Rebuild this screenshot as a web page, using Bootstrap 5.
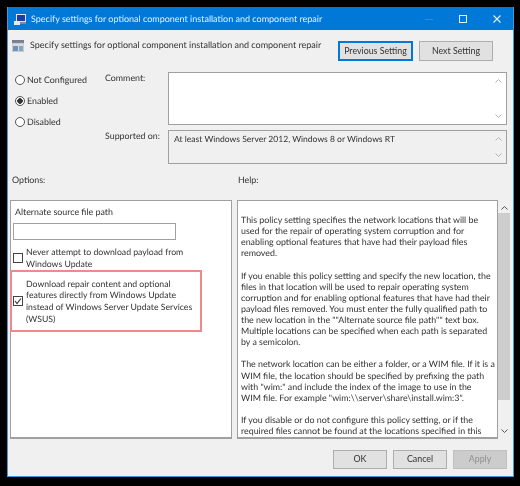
<!DOCTYPE html>
<html lang="en">
<head>
<meta charset="utf-8">
<title>Specify settings</title>
<link href="https://cdn.jsdelivr.net/npm/bootstrap@5.3.0/dist/css/bootstrap.min.css" rel="stylesheet">
<style>
html,body{height:486px;width:520px;overflow:hidden;background:#000;}
body{font-family:"Lato","Open Sans","Liberation Sans",sans-serif;font-size:8.85px;line-height:11.6px;color:#333;padding:7px 6px 9px 7px;text-rendering:geometricPrecision;}
.gp-window{height:470px;background:#f0f0f0;border:1px solid #3f9ad6;border-top:0;display:flex;flex-direction:column;filter:blur(.35px);}
.gp-title{height:23px;background:#0078d7;color:#e4f0fa;display:flex;align-items:center;padding:1px 0 0 6px;flex:none;font-size:9px;}
.gp-title>svg{margin-right:4px;}
.gp-ctrl{margin-left:auto;display:flex;align-items:center;gap:26px;padding-right:12px;}
.gp-head{height:35px;display:flex;align-items:flex-start;padding:9px 20px 0 4px;flex:none;font-size:9px;}
.gp-head svg{margin:1px 6px 0 0;}
.gp-btn{font-size:8.85px;line-height:1;color:#333;background:#e1e1e1;border:1px solid #adadad;border-radius:0;padding:0;height:20px;display:flex;align-items:center;justify-content:center;}
.gp-btn.gp-prev{width:75px;border:2px solid #0078d7;margin:2px 0 0 auto;}
.gp-btn.gp-next{width:74px;margin:2px 0 0 6px;}
.gp-state{display:grid;grid-template-columns:86px 71px 339px;padding:7px 0 0 3px;height:106px;flex:none;}
.gp-radios{display:flex;flex-direction:column;gap:11px;margin-top:1px;padding:2px 0 0 4px;}
.gp-radio{display:flex;align-items:center;gap:2px;height:10px;white-space:nowrap;}
.gp-radio input{width:10px;height:10px;margin:0;border:1px solid #555;background-color:#fff;box-shadow:none;flex:none;}
.gp-radio input:checked{background-color:#fff;border-color:#555;background-image:radial-gradient(circle,#333 0 2.5px,transparent 3px);}
.gp-fields{display:flex;flex-direction:column;padding-left:8px;white-space:nowrap;}
.gp-fieldlabel{height:58px;}
.gp-boxes{display:flex;flex-direction:column;gap:5px;}
.gp-box{border:1px solid #a0a0a0;position:relative;padding:3px 5px;}
.gp-box-a{height:53px;background:#fff;}
.gp-box-b{height:34px;background:#f0f0f0;font-size:8.55px;}
.gp-arrow{position:absolute;right:4px;width:7px;height:4px;}
.gp-labels{display:flex;padding:3px 0 0 4px;height:29px;flex:none;}
.gp-labels div:first-child{width:226px;}
.gp-panels{display:flex;padding:0 0 0 2px;flex:none;height:239px;}
.gp-left{width:222px;height:239px;background:#fff;border:1px solid #a0a0a0;border-bottom-width:2px;position:relative;}
.gp-right{width:261px;height:239px;margin-left:5px;background:#fff;border:1px solid #a0a0a0;border-bottom-width:2px;overflow:hidden;padding:13px 2px 0 3px;line-height:11.1px;white-space:nowrap;}
.gp-right p{margin:0 0 11.2px;}
.gp-scroll{width:12px;height:239px;position:relative;}
.gp-thumb{position:absolute;left:0;right:0;top:13px;height:187px;background:#cdcdcd;}
.gp-alt{padding:5px 4px 0;height:22px;}
.gp-input{display:block;width:163px;height:17px;margin-left:2px;border:1px solid #a0a0a0;background:#fff;}
.gp-check{display:flex;align-items:center;font-size:8.7px;white-space:nowrap;}
.gp-check input.form-check-input{width:10px;height:10px;flex:none;margin:0 3px 0 0;border:1px solid #444;border-radius:0;background-color:#fff;box-shadow:none;}
.gp-check input.form-check-input:checked{background-color:#fff;border-color:#444;background-image:none;}
.gp-c1{padding:6px 0 0 2px;height:30px;width:190px;}
.gp-hl{width:192px;height:62px;margin:0 0 0 -1px;border:2px solid #f08a8a;padding:0;display:flex;align-items:center;position:relative;}
.gp-mark{position:absolute;left:1px;top:24px;width:10px;height:10px;}
.gp-hl input.form-check-input{margin-left:1px;}
.gp-foot{display:flex;justify-content:flex-end;gap:6px;padding:11px 6px 0 0;}
.gp-foot .gp-btn{width:54px;height:19px;}
.gp-foot .gp-apply{background:#ccc;border-color:#bfbfbf;color:#8f8f8f;}
</style>
</head>
<body>
<div class="gp-window">
  <div class="gp-title">
    <svg width="13" height="13" viewBox="0 0 13 13"><rect x="2" y="1" width="10" height="8" fill="#dfe6f2"/><rect x="3" y="2" width="8" height="6" fill="#1b3f9e"/><rect x="0" y="8" width="6" height="4" fill="#e8e8e8"/><rect x="6" y="9" width="6" height="2" fill="#7d8aa0"/></svg>
    <span>Specify settings for optional component installation and component repair</span>
    <div class="gp-ctrl">
      <svg width="8" height="8" viewBox="0 0 8 8"><rect x="0" y="4" width="8" height="1" fill="#2f8fdc"/></svg>
      <svg width="8" height="8" viewBox="0 0 8 8"><rect x=".5" y=".5" width="7" height="7" fill="none" stroke="#e6f1fb"/></svg>
      <svg width="8" height="8" viewBox="0 0 8 8"><path d="M.5 .5l7 7M7.5 .5l-7 7" stroke="#e6f1fb" stroke-width="1.1"/></svg>
    </div>
  </div>
  <div class="gp-head">
    <svg width="12" height="12" viewBox="0 0 12 12"><rect x="0" y="0" width="12" height="3" fill="#77808c"/><rect x="0" y="3" width="12" height="9" fill="#d8dde3" stroke="#9aa3ad" stroke-width=".5"/><rect x="1" y="6" width="5" height="5" fill="#6f93b8"/><rect x="7" y="6" width="4" height="5" fill="#8aa5bf"/></svg>
    <span>Specify settings for optional component installation and component repair</span>
    <button type="button" class="btn gp-btn gp-prev">Previous Setting</button>
    <button type="button" class="btn gp-btn gp-next">Next Setting</button>
  </div>
  <div class="gp-state">
    <div class="gp-radios">
      <label class="gp-radio"><input class="form-check-input" type="radio" name="st"><span>Not Configured</span></label>
      <label class="gp-radio"><input class="form-check-input" type="radio" name="st" checked><span>Enabled</span></label>
      <label class="gp-radio"><input class="form-check-input" type="radio" name="st"><span>Disabled</span></label>
    </div>
    <div class="gp-fields">
      <div class="gp-fieldlabel">Comment:</div>
      <div>Supported on:</div>
    </div>
    <div class="gp-boxes">
      <div class="gp-box gp-box-a">
        <svg class="gp-arrow" style="top:6px" viewBox="0 0 7 4"><path d="M.5 3.5l3-3 3 3" fill="none" stroke="#b5b5b5"/></svg>
        <svg class="gp-arrow" style="bottom:6px" viewBox="0 0 7 4"><path d="M.5 .5l3 3 3-3" fill="none" stroke="#b5b5b5"/></svg>
      </div>
      <div class="gp-box gp-box-b">At least Windows Server 2012, Windows 8 or Windows RT
        <svg class="gp-arrow" style="top:6px" viewBox="0 0 7 4"><path d="M.5 3.5l3-3 3 3" fill="none" stroke="#b5b5b5"/></svg>
        <svg class="gp-arrow" style="bottom:6px" viewBox="0 0 7 4"><path d="M.5 .5l3 3 3-3" fill="none" stroke="#b5b5b5"/></svg>
      </div>
    </div>
  </div>
  <div class="gp-labels"><div>Options:</div><div>Help:</div></div>
  <div class="gp-panels">
    <div class="gp-left">
      <div class="gp-alt">Alternate source file path</div>
      <span class="gp-input"></span>
      <label class="gp-check gp-c1"><input class="form-check-input" type="checkbox"><span>Never attempt to download payload from<br>Windows Update</span></label>
      <label class="gp-check gp-hl"><input class="form-check-input" type="checkbox" checked><span>Download repair content and optional<br>features directly from Windows Update<br>instead of Windows Server Update Services<br>(WSUS)</span>
        <svg class="gp-mark" viewBox="0 0 10 10"><path d="M2 5l2 2.5L8 2.5" fill="none" stroke="#333" stroke-width="1.1"/></svg></label>
    </div>
    <div class="gp-right">
      <p>This policy setting specifies the network locations that will be<br>used for the repair of operating system corruption and for<br>enabling optional features that have had their payload files<br>removed.</p>
      <p>If you enable this policy setting and specify the new location, the<br>files in that location will be used to repair operating system<br>corruption and for enabling optional features that have had their<br>payload files removed. You must enter the fully qualified path to<br>the new location in the ""Alternate source file path"" text box.<br>Multiple locations can be specified when each path is separated<br>by a semicolon.</p>
      <p>The network location can be either a folder, or a WIM file. If it is a<br>WIM file, the location should be specified by prefixing the path<br>with "wim:" and include the index of the image to use in the<br>WIM file. For example "wim:\\server\share\install.wim:3".</p>
      <p>If you disable or do not configure this policy setting, or if the<br>required files cannot be found at the locations specified in this<br>policy, repair files will be downloaded from Windows Update.</p>
    </div>
    <div class="gp-scroll">
      <div class="gp-thumb"></div>
      <svg class="gp-arrow" style="top:6px;right:2px" viewBox="0 0 7 4"><path d="M.5 3.5l3-3 3 3" fill="none" stroke="#555"/></svg>
      <svg class="gp-arrow" style="bottom:6px;right:2px" viewBox="0 0 7 4"><path d="M.5 .5l3 3 3-3" fill="none" stroke="#555"/></svg>
    </div>
  </div>
  <div class="gp-foot">
    <button type="button" class="btn gp-btn">OK</button>
    <button type="button" class="btn gp-btn">Cancel</button>
    <button type="button" class="btn gp-btn gp-apply">Apply</button>
  </div>
</div>
<script src="https://cdn.jsdelivr.net/npm/bootstrap@5.3.0/dist/js/bootstrap.bundle.min.js"></script>
</body>
</html>
